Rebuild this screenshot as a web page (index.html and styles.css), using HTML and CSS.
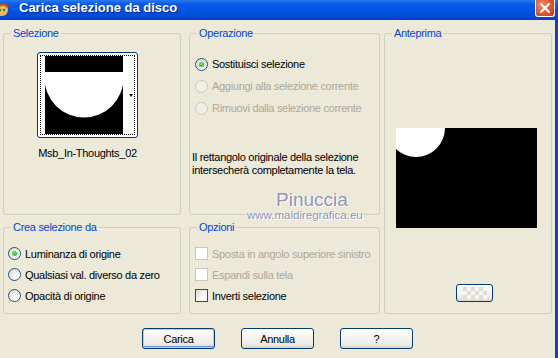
FILE: index.html
```html
<!DOCTYPE html>
<html lang="it">
  <head>
    <meta charset="UTF-8" />
    <title>Carica selezione da disco</title>
    <link rel="stylesheet" href="styles.css">
  </head>
  <body>
    <div class="window">
      <div class="titlebar">
        <span class="app-icon">
          <svg width="16" height="16" viewBox="0 0 16 16">
            <circle cx="8" cy="9" r="6" fill="#f2b36b" />
            <path d="M2 7 C3 2 12 1 15 6 L13 7 C11 4 6 4 4 8 Z" fill="#c2571a" />
            <circle cx="10" cy="9" r="1.2" fill="#2a8a2a" />
            <circle cx="6" cy="9" r="1.2" fill="#2a8a2a" />
          </svg>
        </span>
        <span class="title">Carica selezione da disco</span>
        <span class="close">
          <svg width="10" height="10" viewBox="0 0 10 10">
            <path d="M1 1 L9 9 M9 1 L1 9" stroke="#fff" stroke-width="2" stroke-linecap="square" />
          </svg>
        </span>
      </div>

      <div class="body">
        <div class="groups">
          <fieldset class="group g-sel">
            <legend>Selezione</legend>
            <div class="thumb-wrap">
              <div class="thumb">
                <div class="focus">
                  <svg width="78" height="78" viewBox="0 0 78 78">
                    <rect width="78" height="78" fill="#000" />
                    <circle cx="39" cy="22" r="39.5" fill="#fff" />
                    <rect width="78" height="16" fill="#000" />
                  </svg>
                  <span class="arrow"></span>
                </div>
              </div>
              <div class="thumb-name">Msb_In-Thoughts_02</div>
            </div>
          </fieldset>

          <fieldset class="group g-op">
            <legend>Operazione</legend>
            <div class="opts">
              <div class="opt"><span class="radio on"></span>Sostituisci selezione</div>
              <div class="opt disabled"><span class="radio"></span>Aggiungi alla selezione corrente</div>
              <div class="opt disabled"><span class="radio"></span>Rimuovi dalla selezione corrente</div>
            </div>
            <p class="note">Il rettangolo originale della selezione<br>intersecherà completamente la tela.</p>
          </fieldset>

          <fieldset class="group g-prev">
            <legend>Anteprima</legend>
            <svg class="preview" width="141" height="100" viewBox="0 0 141 100">
              <rect width="141" height="100" fill="#000" />
              <circle cx="20" cy="0" r="29" fill="#fff" />
            </svg>
            <div class="mini-btn">
              <svg width="24" height="12" viewBox="0 0 24 12">
                <rect width="24" height="12" fill="#f6f6f2" />
                <rect x="0" y="0" width="4" height="4" fill="#dedcd6" />
                <rect x="8" y="0" width="4" height="4" fill="#dedcd6" />
                <rect x="16" y="0" width="4" height="4" fill="#dedcd6" />
                <rect x="4" y="4" width="4" height="4" fill="#dedcd6" />
                <rect x="12" y="4" width="4" height="4" fill="#dedcd6" />
                <rect x="20" y="4" width="4" height="4" fill="#dedcd6" />
                <rect x="0" y="8" width="4" height="4" fill="#dedcd6" />
                <rect x="8" y="8" width="4" height="4" fill="#dedcd6" />
                <rect x="16" y="8" width="4" height="4" fill="#dedcd6" />
              </svg>
            </div>
          </fieldset>

          <fieldset class="group g-crea">
            <legend>Crea selezione da</legend>
            <div class="opts">
              <div class="opt"><span class="radio on"></span>Luminanza di origine</div>
              <div class="opt"><span class="radio"></span>Qualsiasi val. diverso da zero</div>
              <div class="opt"><span class="radio"></span>Opacità di origine</div>
            </div>
          </fieldset>

          <fieldset class="group g-opz">
            <legend>Opzioni</legend>
            <div class="opts">
              <div class="opt disabled"><span class="check"></span>Sposta in angolo superiore sinistro</div>
              <div class="opt disabled"><span class="check"></span>Espandi sulla tela</div>
              <div class="opt"><span class="check"></span>Inverti selezione</div>
            </div>
          </fieldset>
        </div>

        <div class="buttons">
          <span class="btn default">Carica</span>
          <span class="btn">Annulla</span>
          <span class="btn">?</span>
        </div>

        <div class="watermark">
          <span class="wm-name">Pinuccia</span>
          <span class="wm-url">www.maidiregrafica.eu</span>
        </div>
      </div>
    </div>
  </body>
</html>
```

FILE: styles.css
```css
* {
  box-sizing: border-box;
}

body {
  margin: 0;
  font-family: "Liberation Sans", Arial, sans-serif;
  font-size: 11px;
  letter-spacing: -0.3px;
  color: #000;
  background: #ece9d8;
}

.window {
  width: 558px;
  height: 358px;
  display: flex;
  flex-direction: column;
  overflow: hidden;
}

/* title bar */
.titlebar {
  height: 20px;
  flex: none;
  display: flex;
  align-items: center;
  padding-bottom: 5px;
  background: linear-gradient(#2a7bf0 0%, #0a5ae8 20%, #0053e3 55%, #0048d6 85%, #0a3fc0 100%);
  color: #fff;
}

.app-icon {
  align-self: flex-start;
  margin: 1px 0 0 -6px;
  width: 16px;
  height: 16px;
}

.title {
  margin-left: 9px;
  font-size: 13px;
  font-weight: 700;
  letter-spacing: 0;
  text-shadow: 1px 1px 0 #0a2a8c;
}

.close {
  align-self: flex-start;
  margin-left: auto;
  margin-right: 3px;
  width: 20px;
  height: 17px;
  display: flex;
  align-items: center;
  justify-content: center;
  background: radial-gradient(circle at 35% 30%, #f08a64, #e0502a 60%, #c2381a);
  border: 1px solid #fff;
  border-top: 0;
  border-radius: 0 0 3px 3px;
}

/* body */
.body {
  flex: 1;
  position: relative;
  padding: 7px 3px 0 3px;
  border-right: 3px solid #0b3fd8;
}

.groups {
  display: grid;
  grid-template-columns: 182px 191px 168px;
  grid-template-rows: 188px 93px;
  column-gap: 4px;
  row-gap: 6px;
}

.group {
  margin: 0;
  padding: 0;
  min-width: 0;
  border: 1px solid #d0d0bf;
  border-radius: 3px;
}

.group legend {
  margin-left: 7px;
  padding: 0 2px;
  color: #0046d5;
  line-height: 13px;
}

.g-sel,
.g-crea {
  width: 178px;
}

.g-prev {
  grid-column: 3;
  grid-row: 1 / 3;
}

/* selezione */
.thumb-wrap {
  display: flex;
  flex-direction: column;
  align-items: center;
  padding: 12px 9px 0 0;
}

.thumb {
  width: 101px;
  height: 86px;
  padding: 2px;
  background: #fff;
  border: 1px solid #003c74;
  border-radius: 3px;
}

.focus {
  height: 100%;
  display: flex;
  align-items: center;
  padding-left: 4px;
  border: 1px dotted #000;
}

.focus svg {
  display: block;
}

.arrow {
  margin: 0 1px 0 auto;
  border-left: 2.5px solid transparent;
  border-right: 2.5px solid transparent;
  border-top: 3px solid #000;
}

.thumb-name {
  margin-top: 9px;
  line-height: 13px;
}

/* options */
.opt {
  display: flex;
  align-items: center;
  gap: 4px;
  height: 21px;
}

.opt.disabled {
  color: #aca899;
}

.g-op .opts {
  padding: 13px 0 0 5px;
}

.g-op .opt {
  height: 22px;
}

.g-crea .opts {
  padding: 9px 0 0 4px;
}

.g-opz .opts {
  padding: 9px 0 0 5px;
}

.radio {
  width: 13px;
  height: 13px;
  flex: none;
  display: flex;
  align-items: center;
  justify-content: center;
  border: 1px solid #1c5180;
  border-radius: 50%;
  background: linear-gradient(135deg, #dcd9cf, #fff 80%);
}

.radio.on::after {
  content: "";
  width: 5px;
  height: 5px;
  border-radius: 50%;
  background: radial-gradient(circle at 40% 40%, #6ee86a, #21a121);
}

.disabled .radio {
  border-color: #cac8bb;
  background: #f1efe6;
}

.check {
  width: 13px;
  height: 13px;
  flex: none;
  border: 1px solid #1c5180;
  background: linear-gradient(135deg, #dcd9cf, #f7f7f4 60%, #fff);
}

.disabled .check {
  border-color: #cac8bb;
  background: #fff;
}

.note {
  margin: 32px 0 0 2px;
  line-height: 13px;
}

/* anteprima */
.preview {
  display: block;
  margin: 88px 0 0 11px;
}

.mini-btn {
  width: 37px;
  height: 18px;
  margin: 56px 0 0 71px;
  display: flex;
  align-items: center;
  justify-content: center;
  border: 1px solid #003c74;
  border-radius: 3px;
  background: linear-gradient(#fff, #f0efe8 70%, #dcd8cc);
}

/* buttons */
.buttons {
  display: flex;
  justify-content: center;
  gap: 26px;
  margin-top: 14px;
}

.btn {
  width: 73px;
  height: 21px;
  display: flex;
  align-items: center;
  justify-content: center;
  border: 1px solid #003c74;
  border-radius: 3px;
  background: linear-gradient(#fff 0%, #f5f4ef 45%, #ecebe4 80%, #d6d0c5 100%);
}

.btn.default {
  box-shadow: inset 0 0 0 1px #b4cff5, inset 0 -1px 0 1px #6f95da;
}

/* watermark */
.watermark {
  position: absolute;
  left: 0;
  top: 0;
  pointer-events: none;
  color: #9294b2;
  text-shadow: 1px 1px 0 #fff, -1px 0 0 #f4f4f8;
}

.wm-name {
  position: absolute;
  left: 276px;
  top: 169px;
  font-size: 19px;
  line-height: 22px;
  letter-spacing: 0;
}

.wm-url {
  position: absolute;
  left: 247px;
  top: 188px;
  font-size: 11.5px;
  line-height: 14px;
  letter-spacing: 0;
  white-space: nowrap;
}
```
